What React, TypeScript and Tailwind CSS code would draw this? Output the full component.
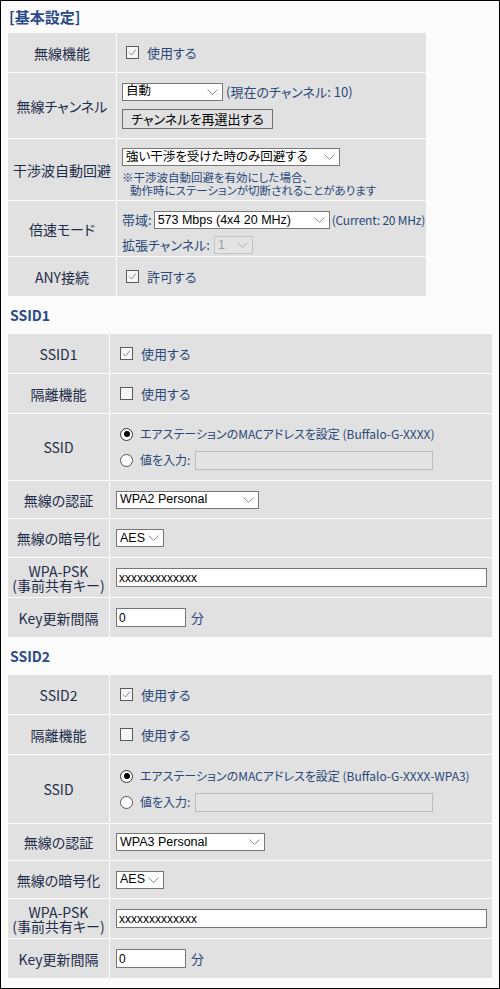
import type { ReactNode } from "react";

function Checkbox({ checked }: { checked?: boolean }) {
  return (
    <span className="ml-[4px] flex size-[13px] shrink-0 items-center justify-center border border-[#5a5a5a] bg-[#f7f7f7]">
      {checked ? (
        <svg width="11" height="11" viewBox="0 0 11 11" fill="none">
          <polyline points="2,5.5 4.5,8 9,2.5" stroke="#7f8cab" strokeWidth="1" />
          <line x1="4.5" y1="8" x2="3.5" y2="7" stroke="#d9a25a" strokeWidth="0.8" />
        </svg>
      ) : null}
    </span>
  );
}

function Radio({ checked }: { checked?: boolean }) {
  return (
    <span
      className={`ml-[4px] flex size-[13px] shrink-0 items-center justify-center rounded-full border bg-white ${
        checked ? "border-[#333]" : "border-[#555]"
      }`}
    >
      {checked ? <span className="size-[6px] rounded-full bg-black" /> : null}
    </span>
  );
}

function Chevron({ color }: { color: string }) {
  return (
    <svg width="11" height="6" viewBox="0 0 11 6" fill="none" className="shrink-0">
      <polyline points="0.5,0.5 5.5,5.5 10.5,0.5" stroke={color} strokeWidth="1" />
    </svg>
  );
}

function Select({
  value,
  className,
  disabled,
}: {
  value: string;
  className: string;
  disabled?: boolean;
}) {
  return (
    <div
      className={`flex h-[18px] shrink-0 items-center justify-between border pl-[3px] pr-[4px] font-['Liberation_Sans','Noto_Sans_CJK_JP',sans-serif] text-[12.5px] leading-none ${
        disabled
          ? "border-[#c2c2c2] bg-[#e4e4e4] text-[#9c9c9c]"
          : "border-[#767676] bg-white text-black"
      } ${className}`}
    >
      <span className="whitespace-nowrap">{value}</span>
      <Chevron color={disabled ? "#b0b0b0" : "#8c8c8c"} />
    </div>
  );
}

function TextInput({ value, className }: { value: string; className: string }) {
  return (
    <div
      className={`flex h-[19px] items-center border border-[#767676] bg-white pl-[2px] font-['Liberation_Sans',sans-serif] text-[12px] leading-none text-black ${className}`}
    >
      {value}
    </div>
  );
}

function Row({
  label,
  height,
  children,
  valueClass = "",
}: {
  label: ReactNode;
  height: string;
  children: ReactNode;
  valueClass?: string;
}) {
  return (
    <>
      <div
        className={`flex items-center justify-center bg-[#e1e1e1] text-center text-[14px] leading-[14px] text-[#1f2d4a] ${height}`}
      >
        {label}
      </div>
      <div className={`flex bg-[#e1e1e1] text-[13px] leading-[16px] text-[#2a4878] ${height} ${valueClass}`}>
        {children}
      </div>
    </>
  );
}

function CheckRow({ checked, text }: { checked?: boolean; text: string }) {
  return (
    <div className="flex items-center gap-[8px]">
      <Checkbox checked={checked} />
      <span>{text}</span>
    </div>
  );
}

function Heading({ children }: { children: ReactNode }) {
  return (
    <div className="flex h-[38px] items-center pl-[2px] text-[14px] font-bold text-[#2b4a8a]">
      {children}
    </div>
  );
}

const pskLabel = (
  <span className="flex flex-col">
    <span>WPA-PSK</span>
    <span>(事前共有キー)</span>
  </span>
);

function SsidTable({
  name,
  macText,
  auth,
  authWidth,
  heights,
}: {
  name: string;
  macText: string;
  auth: string;
  authWidth: string;
  heights: string[];
}) {
  return (
    <div className="grid w-[484px] grid-cols-[101px_382px] gap-px">
      <Row label={name} height={heights[0]} valueClass="items-center pl-[6px]">
        <CheckRow checked text="使用する" />
      </Row>
      <Row label="隔離機能" height={heights[1]} valueClass="items-center pl-[6px]">
        <CheckRow text="使用する" />
      </Row>
      <Row label="SSID" height={heights[2]} valueClass="flex-col justify-center gap-[8px] pl-[6px]">
        <div className="flex h-[18px] items-center gap-[7px]">
          <Radio checked />
          <span className="whitespace-nowrap text-[12px]">{macText}</span>
        </div>
        <div className="flex h-[18px] items-center gap-[7px]">
          <Radio />
          <span className="text-[12px]">値を入力:</span>
          <div className="ml-[-2px] h-[19px] w-[238px] border border-[#bcbcbc] bg-[#e4e4e4]" />
        </div>
      </Row>
      <Row label="無線の認証" height={heights[3]} valueClass="items-center pl-[6px]">
        <Select value={auth} className={authWidth} />
      </Row>
      <Row label="無線の暗号化" height={heights[4]} valueClass="items-center pl-[6px]">
        <Select value="AES" className="w-[48px]" />
      </Row>
      <Row label={pskLabel} height={heights[5]} valueClass="items-center pl-[6px] pr-[5px]">
        <TextInput value="xxxxxxxxxxxxx" className="w-full" />
      </Row>
      <Row label="Key更新間隔" height={heights[6]} valueClass="items-center gap-[5px] pl-[6px]">
        <TextInput value="0" className="w-[70px]" />
        <span>分</span>
      </Row>
    </div>
  );
}

export default function App() {
  return (
    <div className="h-[989px] w-[500px] overflow-hidden border border-black bg-[#fbfbfb] pl-[7px] font-['Noto_Sans_CJK_JP',sans-serif] [font-feature-settings:'palt']">
      <div className="flex h-[32px] items-center pl-[1px] text-[15px] font-bold text-[#2b4a8a]">
        [基本設定]
      </div>

      <div className="grid w-[418px] grid-cols-[108px_309px] gap-px">
        <Row label="無線機能" height="h-[39px]" valueClass="items-center pl-[5px]">
          <CheckRow checked text="使用する" />
        </Row>
        <Row label="無線チャンネル" height="h-[65px]" valueClass="flex-col justify-center gap-[8px] pl-[5px]">
          <div className="flex items-center gap-[3px]">
            <Select value="自動" className="w-[101px]" />
            <span className="whitespace-nowrap">(現在のチャンネル: 10)</span>
          </div>
          <div className="flex h-[20px] w-[151px] items-center justify-center border border-[#707070] bg-[#e1e1e1] text-[13px] leading-none text-black">
            チャンネルを再選出する
          </div>
        </Row>
        <Row label="干渉波自動回避" height="h-[61px]" valueClass="flex-col gap-[5px] pl-[5px] pt-[9px]">
          <Select value="強い干渉を受けた時のみ回避する" className="w-[218px]" />
          <div className="text-[11.5px] leading-[13px]">
            <div>※干渉波自動回避を有効にした場合、</div>
            <div className="pl-[8px]">動作時にステーションが切断されることがあります</div>
          </div>
        </Row>
        <Row label="倍速モード" height="h-[55px]" valueClass="flex-col gap-[7px] pl-[5px] pt-[10px]">
          <div className="flex items-center gap-[2px] whitespace-nowrap">
            <span>帯域:</span>
            <Select value="573 Mbps (4x4 20 MHz)" className="w-[176px]" />
            <span className="text-[12px] tracking-[-0.2px]">(Current: 20 MHz)</span>
          </div>
          <div className="flex items-center gap-[4px] whitespace-nowrap">
            <span>拡張チャンネル:</span>
            <Select value="1" disabled className="w-[39px]" />
          </div>
        </Row>
        <Row label="ANY接続" height="h-[39px]" valueClass="items-center pl-[5px]">
          <CheckRow checked text="許可する" />
        </Row>
      </div>

      <Heading>SSID1</Heading>
      <SsidTable
        name="SSID1"
        macText="エアステーションのMACアドレスを設定 (Buffalo-G-XXXX)"
        auth="WPA2 Personal"
        authWidth="w-[143px]"
        heights={["h-[39px]", "h-[39px]", "h-[66px]", "h-[37px]", "h-[38px]", "h-[39px]", "h-[39px]"]}
      />

      <Heading>SSID2</Heading>
      <SsidTable
        name="SSID2"
        macText="エアステーションのMACアドレスを設定 (Buffalo-G-XXXX-WPA3)"
        auth="WPA3 Personal"
        authWidth="w-[149px]"
        heights={["h-[39px]", "h-[39px]", "h-[68px]", "h-[36px]", "h-[37px]", "h-[39px]", "h-[39px]"]}
      />
    </div>
  );
}
